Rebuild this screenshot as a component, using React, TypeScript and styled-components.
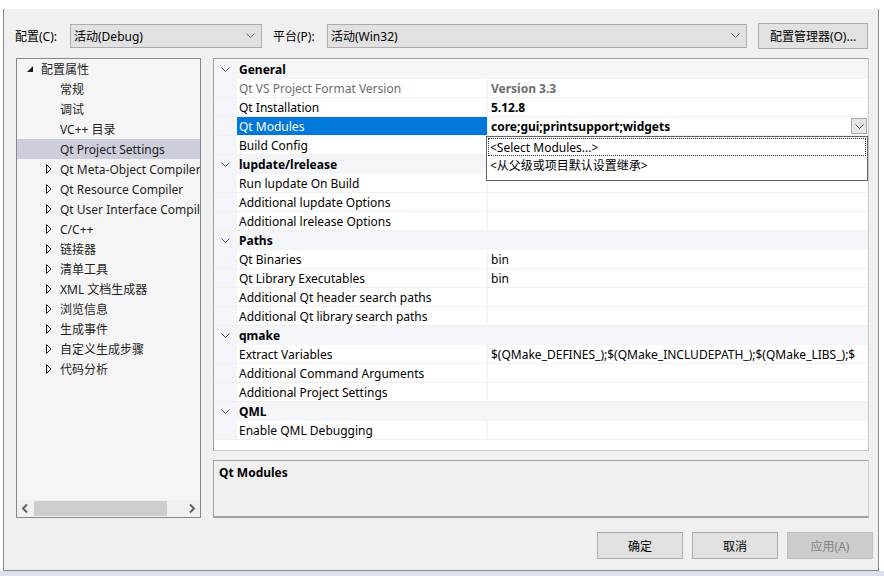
import React from 'react'
import styled, { createGlobalStyle } from 'styled-components'

const GlobalStyle = createGlobalStyle`
  html, body { margin: 0; padding: 0; background: #ffffff; }
  body {
    font-family: "Noto Sans", "Noto Sans CJK SC", sans-serif;
    font-size: 12px;
    color: #000;
  }
  * { box-sizing: border-box; }
`

const Screen = styled.div`
  width: 884px;
  height: 576px;
  overflow: hidden;
  background: #ffffff;
  display: flex;
  flex-direction: column;
`

const Dialog = styled.div`
  margin: 9px 0 0 3px;
  width: 876px;
  height: 562px;
  background: #f0f0f0;
  border-left: 1px solid #8a8a8a;
  border-right: 1px solid #8a8a8a;
  border-bottom: 1px solid #8a8a8a;
  padding: 14px 5px 0 12px;
  display: flex;
  flex-direction: column;
`

const BelowStrip = styled.div`
  flex: 1;
  background: #dbe2ed;
`

const TopRow = styled.div`
  display: flex;
  align-items: center;
  height: 25px;
`

const Label = styled.span<{ $width: number; $gap?: number }>`
  width: ${p => p.$width}px;
  margin-left: ${p => p.$gap ?? -1}px;
  white-space: nowrap;
  color: #000;
`

const Combo = styled.div<{ $width: number }>`
  width: ${p => p.$width}px;
  height: 24px;
  background: #e1e1e1;
  border: 1px solid #adadad;
  display: flex;
  align-items: center;
  padding: 0 6px 0 3px;
  justify-content: space-between;
`

const Button = styled.button<{ $width?: number; $height?: number; $disabled?: boolean }>`
  width: ${p => p.$width ?? 86}px;
  height: ${p => p.$height ?? 27}px;
  background: ${p => (p.$disabled ? '#cccccc' : '#e1e1e1')};
  border: 1px solid ${p => (p.$disabled ? '#bfbfbf' : '#adadad')};
  color: ${p => (p.$disabled ? '#838383' : '#000')};
  font: inherit;
  padding: 0;
`

const ManagerButton = styled(Button)`
  margin-left: 11px;
`

const Main = styled.div`
  display: flex;
  gap: 12px;
  margin-top: 10px;
  margin-right: 4px;
  height: 460px;
`

const Tree = styled.div`
  width: 185px;
  flex: none;
  border: 1px solid #828790;
  background: #f5f5f5;
  display: flex;
  flex-direction: column;
`

const TreeList = styled.div`
  flex: 1;
  overflow: hidden;
`

const TreeItem = styled.div<{ $level: number; $selected?: boolean }>`
  height: 20px;
  display: flex;
  align-items: center;
  padding-left: ${p => (p.$level ? 29 : 10)}px;
  background: ${p => (p.$selected ? '#cccedb' : 'transparent')};
  color: #1e1e1e;
  white-space: nowrap;
  overflow: hidden;
`

const Expander = styled.span`
  width: 14px;
  flex: none;
  display: flex;
  align-items: center;
`

const HScroll = styled.div`
  height: 17px;
  background: #f0f0f0;
  display: flex;
  align-items: center;
  padding: 0 4px;
  gap: 4px;
`

const Thumb = styled.div`
  width: 133px;
  height: 15px;
  background: #cdcdcd;
  margin-left: 1px;
`

const ScrollSpacer = styled.span`
  flex: 1;
`

const RightPane = styled.div`
  flex: 1;
  min-width: 0;
  display: flex;
  flex-direction: column;
  gap: 9px;
`

const Grid = styled.div`
  position: relative;
  height: 393px;
  padding-top: 1px;
  background: #ffffff;
  border: 1px solid #a0a0a0;
  border-right-color: #c8c8c8;
  border-bottom-color: #c8c8c8;
`

const GridRows = styled.div`
  overflow: hidden;
`

const CategoryRow = styled.div`
  height: 19px;
  display: flex;
  align-items: center;
  background: #f3f5f9;
  font-weight: 700;
  color: #000;
`

const CategoryTitle = styled.span`
  padding-left: 2px;
`

const Chevron = styled.span`
  width: 23px;
  flex: none;
  display: flex;
  justify-content: center;
`

const PropRow = styled.div`
  height: 19px;
  display: flex;
  border-bottom: 1px solid #f0f0f0;
`

const Gutter = styled.div`
  width: 23px;
  flex: none;
  background: #f3f5f9;
`

const NameCell = styled.div<{ $selected?: boolean; $muted?: boolean }>`
  width: 251px;
  flex: none;
  padding-left: 2px;
  display: flex;
  align-items: center;
  border-right: 1px solid #f0f0f0;
  white-space: nowrap;
  overflow: hidden;
  background: ${p => (p.$selected ? '#0078d7' : 'transparent')};
  color: ${p => (p.$selected ? '#ffffff' : p.$muted ? '#6d6d6d' : '#000')};
`

const ValueCell = styled.div<{ $bold?: boolean; $muted?: boolean }>`
  flex: 1;
  min-width: 0;
  padding-left: 3px;
  display: flex;
  align-items: center;
  justify-content: space-between;
  white-space: nowrap;
  overflow: hidden;
  font-weight: ${p => (p.$bold ? 700 : 400)};
  color: ${p => (p.$muted ? '#6d6d6d' : '#000')};
`

const ValueText = styled.span`
  overflow: hidden;
`

const DropButton = styled.span`
  width: 16px;
  height: 16px;
  margin-right: 1px;
  flex: none;
  background: #e6e6e6;
  border: 1px solid #a8a8a8;
  display: flex;
  align-items: center;
  justify-content: center;
`

const DropList = styled.div`
  position: absolute;
  left: 272px;
  top: 77px;
  right: 0;
  height: 45px;
  background: #ffffff;
  border: 1px solid #646464;
  padding: 1px 1px 0 1px;
  z-index: 2;
`

const DropItem = styled.div<{ $focused?: boolean }>`
  height: 18px;
  display: flex;
  align-items: center;
  padding-left: 2px;
  outline: ${p => (p.$focused ? '1px dotted #333' : 'none')};
  outline-offset: -1px;
`

const Description = styled.div`
  height: 58px;
  background: #f0f0f0;
  border: 1px solid #a0a0a0;
  border-right-color: #d0d0d0;
  border-bottom: 2px solid #a0a0a0;
  padding: 3px 5px;
  font-weight: 700;
`

const ButtonRow = styled.div`
  display: flex;
  justify-content: flex-end;
  gap: 9px;
  margin-top: 14px;
`

const DownChevron = ({ color = '#606060', w = 9 }: { color?: string; w?: number }) => (
  <svg width={w} height={5} viewBox="0 0 9 5" style={{ display: 'block' }}>
    <polyline points="0.5,0.5 4.5,4.5 8.5,0.5" fill="none" stroke={color} strokeWidth="1" />
  </svg>
)

const OpenTriangle = () => (
  <svg width={6} height={6} viewBox="0 0 6 6" style={{ display: 'block' }}>
    <polygon points="6,0 6,6 0,6" fill="#1e1e1e" />
  </svg>
)

const ClosedTriangle = () => (
  <svg width={6} height={10} viewBox="0 0 6 10" style={{ display: 'block' }}>
    <polygon points="0.5,0.5 5,5 0.5,9.5" fill="none" stroke="#1e1e1e" strokeWidth="1" />
  </svg>
)

const ScrollArrow = ({ dir }: { dir: 'l' | 'r' }) => (
  <svg width={8} height={9} viewBox="0 0 8 9" style={{ display: 'block' }}>
    <polyline
      points={dir === 'l' ? '6,0.5 2,4.5 6,8.5' : '2,0.5 6,4.5 2,8.5'}
      fill="none"
      stroke="#606060"
      strokeWidth="2"
    />
  </svg>
)

type TreeNode = { label: string; level: number; exp?: 'open' | 'closed'; selected?: boolean }

const treeNodes: TreeNode[] = [
  { label: '配置属性', level: 0, exp: 'open' },
  { label: '常规', level: 1 },
  { label: '调试', level: 1 },
  { label: 'VC++ 目录', level: 1 },
  { label: 'Qt Project Settings', level: 1, selected: true },
  { label: 'Qt Meta-Object Compiler', level: 1, exp: 'closed' },
  { label: 'Qt Resource Compiler', level: 1, exp: 'closed' },
  { label: 'Qt User Interface Compiler', level: 1, exp: 'closed' },
  { label: 'C/C++', level: 1, exp: 'closed' },
  { label: '链接器', level: 1, exp: 'closed' },
  { label: '清单工具', level: 1, exp: 'closed' },
  { label: 'XML 文档生成器', level: 1, exp: 'closed' },
  { label: '浏览信息', level: 1, exp: 'closed' },
  { label: '生成事件', level: 1, exp: 'closed' },
  { label: '自定义生成步骤', level: 1, exp: 'closed' },
  { label: '代码分析', level: 1, exp: 'closed' },
]

type Prop = { name: string; value?: string; bold?: boolean; muted?: boolean; selected?: boolean; dropdown?: boolean }
type Category = { title: string; props: Prop[] }

const categories: Category[] = [
  {
    title: 'General',
    props: [
      { name: 'Qt VS Project Format Version', value: 'Version 3.3', bold: true, muted: true },
      { name: 'Qt Installation', value: '5.12.8', bold: true },
      { name: 'Qt Modules', value: 'core;gui;printsupport;widgets', bold: true, selected: true, dropdown: true },
      { name: 'Build Config' },
    ],
  },
  {
    title: 'lupdate/lrelease',
    props: [
      { name: 'Run lupdate On Build' },
      { name: 'Additional lupdate Options' },
      { name: 'Additional lrelease Options' },
    ],
  },
  {
    title: 'Paths',
    props: [
      { name: 'Qt Binaries', value: 'bin' },
      { name: 'Qt Library Executables', value: 'bin' },
      { name: 'Additional Qt header search paths' },
      { name: 'Additional Qt library search paths' },
    ],
  },
  {
    title: 'qmake',
    props: [
      { name: 'Extract Variables', value: '$(QMake_DEFINES_);$(QMake_INCLUDEPATH_);$(QMake_LIBS_);$' },
      { name: 'Additional Command Arguments' },
      { name: 'Additional Project Settings' },
    ],
  },
  {
    title: 'QML',
    props: [{ name: 'Enable QML Debugging' }],
  },
]

export default function App() {
  return (
    <Screen>
      <GlobalStyle />
      <Dialog>
        <TopRow>
          <Label $width={55}>配置(C):</Label>
          <Combo $width={192}>
            <span>活动(Debug)</span>
            <DownChevron />
          </Combo>
          <Label $width={54} $gap={11}>平台(P):</Label>
          <Combo $width={420}>
            <span>活动(Win32)</span>
            <DownChevron />
          </Combo>
          <ManagerButton $width={110} $height={26}>配置管理器(O)...</ManagerButton>
        </TopRow>

        <Main>
          <Tree>
            <TreeList>
              {treeNodes.map(n => (
                <TreeItem key={n.label} $level={n.level} $selected={n.selected}>
                  <Expander>
                    {n.exp === 'open' && <OpenTriangle />}
                    {n.exp === 'closed' && <ClosedTriangle />}
                  </Expander>
                  {n.label}
                </TreeItem>
              ))}
            </TreeList>
            <HScroll>
              <ScrollArrow dir="l" />
              <Thumb />
              <ScrollSpacer />
              <ScrollArrow dir="r" />
            </HScroll>
          </Tree>

          <RightPane>
            <Grid>
              <GridRows>
                {categories.map(c => (
                  <React.Fragment key={c.title}>
                    <CategoryRow>
                      <Chevron>
                        <DownChevron color="#555" w={9} />
                      </Chevron>
                      <CategoryTitle>{c.title}</CategoryTitle>
                    </CategoryRow>
                    {c.props.map(p => (
                      <PropRow key={p.name}>
                        <Gutter />
                        <NameCell $selected={p.selected} $muted={p.muted}>{p.name}</NameCell>
                        <ValueCell $bold={p.bold} $muted={p.muted}>
                          <ValueText>{p.value}</ValueText>
                          {p.dropdown && (
                            <DropButton>
                              <DownChevron color="#444" w={9} />
                            </DropButton>
                          )}
                        </ValueCell>
                      </PropRow>
                    ))}
                  </React.Fragment>
                ))}
              </GridRows>
              <DropList>
                <DropItem $focused>&lt;Select Modules...&gt;</DropItem>
                <DropItem>&lt;从父级或项目默认设置继承&gt;</DropItem>
              </DropList>
            </Grid>
            <Description>Qt Modules</Description>
          </RightPane>
        </Main>

        <ButtonRow>
          <Button>确定</Button>
          <Button>取消</Button>
          <Button $disabled>应用(A)</Button>
        </ButtonRow>
      </Dialog>
      <BelowStrip />
    </Screen>
  )
}
